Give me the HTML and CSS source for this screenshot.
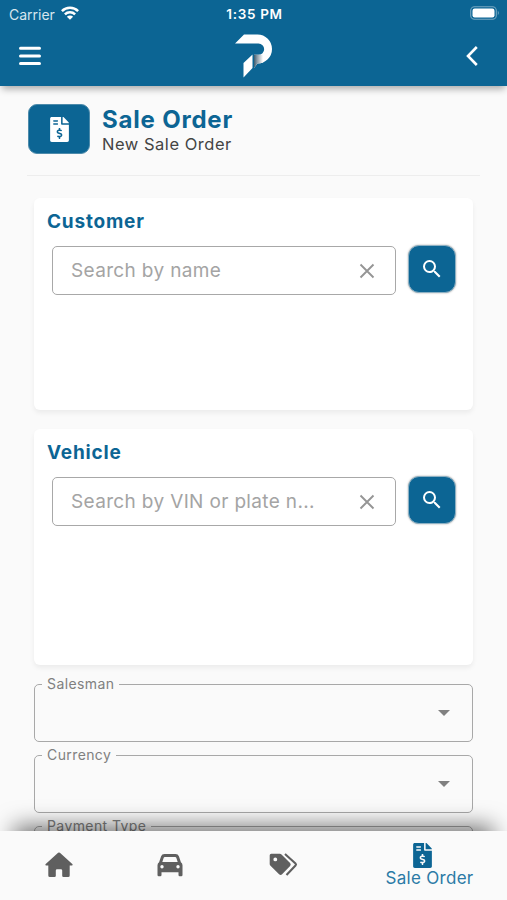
FILE: index.html
```html
<!DOCTYPE html>
<html lang="en">
<head>
<meta charset="utf-8">
<title>Sale Order</title>
<link rel="stylesheet" href="styles.css">
</head>
<body>
<svg class="defs" width="0" height="0" aria-hidden="true">
  <symbol id="invoice" viewBox="0 0 384 512"><path d="M377 105L279.1 7c-4.5-4.5-10.6-7-17-7H256v128h128v-6.1c0-6.3-2.5-12.4-7-16.9zm-153 31V0H34C14 0 0 14 0 34v444c0 20 14 34 34 34h316c20 0 34-14 34-34V160H248c-13.2 0-24-10.8-24-24zM64 72c0-4.42 3.58-8 8-8h80c4.42 0 8 3.58 8 8v16c0 4.42-3.58 8-8 8H72c-4.42 0-8-3.58-8-8V72zm0 80v-16c0-4.42 3.58-8 8-8h80c4.42 0 8 3.58 8 8v16c0 4.42-3.58 8-8 8H72c-4.42 0-8-3.58-8-8zm144 263.88V440c0 4.42-3.58 8-8 8h-16c-4.42 0-8-3.58-8-8v-24.29c-11.29-.58-22.27-4.52-31.37-11.35-3.9-2.93-4.1-8.77-.57-12.14l11.75-11.21c2.77-2.64 6.89-2.76 10.13-.73 3.87 2.42 8.26 3.72 12.82 3.72h28.11c6.5 0 11.8-5.92 11.8-13.19 0-5.95-3.61-11.19-8.77-12.73l-45-13.5c-18.59-5.58-31.58-23.42-31.58-43.39 0-24.52 19.05-44.44 42.67-45.07V232c0-4.42 3.58-8 8-8h16c4.42 0 8 3.58 8 8v24.29c11.29.58 22.27 4.51 31.37 11.35 3.9 2.93 4.1 8.77.57 12.14l-11.75 11.21c-2.77 2.64-6.89 2.76-10.13.73-3.87-2.43-8.26-3.72-12.82-3.72h-28.11c-6.5 0-11.8 5.92-11.8 13.19 0 5.95 3.61 11.19 8.77 12.73l45 13.5c18.59 5.58 31.58 23.42 31.58 43.39 0 24.53-19.05 44.44-42.67 45.07z"/></symbol>
  <symbol id="search" viewBox="0 0 24 24"><path d="M15.5 14h-.79l-.28-.27A6.47 6.47 0 0 0 16 9.500 6.500 6.500 0 1 0 9.500 16c1.610 0 3.090-.59 4.230-1.570l.27.28v.79l5 4.990L20.490 19l-4.990-5zm-6 0C7.010 14 5 11.990 5 9.500S7.010 5 9.500 5 14 7.010 14 9.500 11.990 14 9.500 14z"/></symbol>
  <symbol id="clear" viewBox="0 0 16 16"><path d="M1.500 1.500l13 13M14.500 1.500l-13 13" fill="none" stroke="currentColor" stroke-width="1.900"/></symbol>
</svg>

<header class="topbar">
  <div class="status">
    <div class="carrier">Carrier
      <svg width="18" height="14" viewBox="0 0 18 14"><g fill="none" stroke="#fff" stroke-width="2.500"><path d="M.9 5.100a11.500 11.500 0 0 1 16.200 0"/><path d="M3.900 8.300a7.200 7.200 0 0 1 10.200 0"/></g><path d="M9 13.800l-3.100-3.100a4.400 4.400 0 0 1 6.200 0z" fill="#fff"/></svg>
    </div>
    <div class="time">1:35 PM</div>
    <div class="battery"><svg width="30" height="14" viewBox="0 0 30 14"><rect x=".7" y=".7" width="25.600" height="12.600" rx="3.800" fill="none" stroke="#76a7c1" stroke-width="1.100"/><rect x="2.500" y="2.500" width="22" height="9" rx="2.200" fill="#fff"/><path d="M27.800 4.800q2 2.200 0 4.400z" fill="#76a7c1"/></svg></div>
  </div>
  <div class="toolbar">
    <svg width="22" height="20" viewBox="0 0 22 20"><path d="M1.500 2.200h19M1.500 10h19M1.500 17.500h19" stroke="#fff" stroke-width="3" stroke-linecap="round"/></svg>
    <svg width="38" height="44" viewBox="0 0 38 44">
      <defs><linearGradient id="fold" x1="19" x2="28" y1="0" y2="0" gradientUnits="userSpaceOnUse"><stop offset="0" stop-color="#3c5c70"/><stop offset=".35" stop-color="#8b9aa5"/><stop offset="1" stop-color="#fff"/></linearGradient></defs>
      <path d="M0 9.500L9 .5H22.500a14.500 14.500 0 0 1 0 29L19 34V20.800h4.500a5.600 5.600 0 0 0 0-11.300z" fill="#fff"/>
      <path d="M19 20.800h9v7.700q-2.500 1.100-5.500 1.100L19 34z" fill="url(#fold)"/>
      <path d="M17.500 20.500V34L8.500 43.500V29z" fill="#fff"/>
    </svg>
    <svg width="12" height="20" viewBox="0 0 12 20"><path d="M10.800 1L2 10l8.800 9" fill="none" stroke="#fff" stroke-width="2.600"/></svg>
  </div>
</header>

<main class="content">
  <section class="heading">
    <div class="badge"><svg width="19" height="25"><use href="#invoice"/></svg></div>
    <div>
      <h1>Sale Order</h1>
      <p>New Sale Order</p>
    </div>
  </section>

  <section class="card customer">
    <h2>Customer</h2>
    <div class="search-row">
      <div class="search-box"><span>Search by name</span><svg width="16" height="16"><use href="#clear"/></svg></div>
      <button class="search-button"><svg width="24" height="24"><use href="#search"/></svg></button>
    </div>
  </section>

  <section class="card vehicle">
    <h2>Vehicle</h2>
    <div class="search-row">
      <div class="search-box"><span>Search by VIN or plate n...</span><svg width="16" height="16"><use href="#clear"/></svg></div>
      <button class="search-button"><svg width="24" height="24"><use href="#search"/></svg></button>
    </div>
  </section>

  <fieldset class="select"><legend>Salesman</legend><i></i></fieldset>
  <fieldset class="select"><legend>Currency</legend><i></i></fieldset>
  <fieldset class="select"><legend>Payment Type</legend><i></i></fieldset>
</main>

<nav class="tabs">
  <a><svg width="28" height="26" viewBox="0 0 28 26"><path d="M13.100.8q.9-.8 1.800 0L27.300 12q.9 1.100-.4 1.600h-2.200v9.900q0 1.500-1.500 1.500h-4.700q-1.300 0-1.300-1.300v-5.200q0-1.300-1.300-1.300h-3.800q-1.300 0-1.300 1.300v5.200q0 1.300-1.300 1.300H4.800q-1.500 0-1.500-1.500v-9.900H1.100q-1.300-.5-.4-1.600z"/></svg></a>
  <a><svg width="26" height="24" viewBox="0 0 26 24"><path fill-rule="evenodd" d="M7.500 1h11q2.600 0 3.400 2.300l2 6q1.600.8 1.600 3V22q0 1.200-1.200 1.200h-1.600q-1.200 0-1.200-1.200v-2.700h-17V22q0 1.200-1.200 1.200H1.700Q.5 23.200.5 22v-9.700q0-2.200 1.600-3l2-6Q4.900 1 7.500 1zm.3 3Q7 4 6.700 4.800L5.300 9h15.400l-1.400-4.200Q19 4 18.200 4zM5 12a1.700 1.700 0 1 0 0 3.400A1.700 1.700 0 0 0 5 12zm16 0a1.700 1.700 0 1 0 0 3.400 1.700 1.700 0 0 0 0-3.400z"/></svg></a>
  <a><svg width="29" height="23" viewBox="0 0 29 23"><path fill-rule="evenodd" d="M2.300.7h8.500q1 0 1.700.7l8.600 8.600q1.300 1.500 0 3l-8 8.300q-1.500 1.300-3 0L1.500 12.700Q.7 12 .7 11V2.300Q.7.700 2.300.7zM6.300 4.500a1.900 1.900 0 1 0 0 3.800 1.900 1.900 0 0 0 0-3.800z"/><path d="M16 1l10.500 9.500q1 1 0 2L17.500 22" fill="none" stroke="#5f5f5f" stroke-width="2.100"/></svg></a>
  <a class="active"><svg width="19" height="25"><use href="#invoice"/></svg><span>Sale Order</span></a>
</nav>
</body>
</html>
```
FILE: styles.css
```css
* { box-sizing: border-box; }
body {
  margin: 0;
  width: 507px;
  height: 900px;
  overflow: hidden;
  display: flex;
  flex-direction: column;
  background: #fafafa;
  font-family: Inter, "Liberation Sans", sans-serif;
}
svg { display: block; flex: none; fill: currentColor; }
.defs { position: absolute; }
h1, h2, p { margin: 0; }

.topbar {
  flex: none;
  height: 86px;
  background: #0c6594;
  color: #fff;
  box-shadow: 0 5px 7px -2px rgba(0, 0, 0, .32);
  z-index: 1;
}
.status {
  height: 28px;
  display: grid;
  grid-template-columns: 1fr auto 1fr;
  align-items: center;
  padding: 0 7px 0 9px;
}
.carrier { display: flex; gap: 6px; align-items: center; font-size: 14px; color: #d7e6ee; }
.carrier svg { margin-top: -2px; }
.time { font-size: 13.500px; font-weight: 600; letter-spacing: .7px; }
.battery { justify-self: end; margin-top: -2px; }
.toolbar {
  height: 56px;
  display: grid;
  grid-template-columns: 1fr auto 1fr;
  align-items: center;
  padding: 0 29px 0 19px;
}
.toolbar svg:last-child { justify-self: end; }
.toolbar svg:nth-child(2) { margin-left: 10px; }

.content { height: 745px; flex: none; overflow: hidden; padding: 0 34px; }
.heading {
  display: flex;
  gap: 12px;
  height: 90px;
  margin: 0 -7px 22px;
  padding: 18px 0 0 1px;
  border-bottom: 1px solid #ededed;
}
.badge {
  width: 62px;
  height: 50px;
  border-radius: 9px;
  background: #0c6594;
  border: 1px solid #4d8bab;
  color: #fff;
  display: flex;
  align-items: center;
  justify-content: center;
}
.badge svg { margin-left: 1px; }
h1 { padding-top: 1px; font-size: 24px; line-height: 30px; font-weight: 650; color: #0c6594; letter-spacing: .8px; }
.heading p { font-size: 16.500px; line-height: 18px; color: #444; letter-spacing: .52px; }

.card {
  background: #fff;
  border-radius: 6px;
  padding: 12px 17px 0 13px;
  box-shadow: 0 3px 5px rgba(0, 0, 0, .06);
}
.customer { height: 212px; margin-bottom: 19px; }
.vehicle { height: 236px; margin-bottom: 11px; }
h2 { font-size: 19px; line-height: 24px; font-weight: 650; color: #0c6594; letter-spacing: .8px; }
.search-row { display: flex; gap: 12px; margin: 12px 0 0 5px; }
.search-box {
  flex: 1;
  height: 49px;
  border: 1px solid #a8a8a8;
  border-radius: 5px;
  display: flex;
  align-items: center;
  justify-content: space-between;
  padding: 0 20px 0 18px;
  color: #959595;
  font-size: 19px;
  letter-spacing: .35px;
}
.search-box span { color: #a4a4a4; white-space: nowrap; }
.search-button {
  width: 48px;
  height: 48px;
  margin-top: -1px;
  padding: 0;
  border: 1px solid #8db1c4;
  border-radius: 11px;
  background: #0c6594;
  color: #fff;
  box-shadow: 0 0 2px rgba(0, 0, 0, .35);
  display: flex;
  align-items: center;
  justify-content: center;
}

.select {
  height: 66px;
  margin: 0 0 5px;
  padding: 0 22px 0 7px;
  border: 1px solid #a8a8a8;
  border-radius: 5px;
}
.select legend { height: 16px; line-height: 16px; padding: 0 5px; font-size: 14px; letter-spacing: .4px; color: #808080; }
.select i {
  display: block;
  margin: 18px 0 0 auto;
  width: 0;
  border: 6px solid transparent;
  border-top-color: #808080;
  border-bottom: 0;
}

.tabs {
  flex: none;
  height: 69px;
  background: #fafafa;
  box-shadow: 0 -19px 22px -14px rgba(0, 0, 0, .55);
  z-index: 1;
  display: grid;
  grid-template-columns: 117px 105px 122px 1fr;
  color: #5f5f5f;
}
.tabs a { display: flex; flex-direction: column; align-items: center; justify-content: center; padding-bottom: 2px; }
.tabs .active { color: #0c6594; padding: 0 0 0 8px; }
.active svg { margin-left: -14px; }
.active span { color: #2b7aa6; font-size: 17px; line-height: 20px; letter-spacing: .3px; }
```
